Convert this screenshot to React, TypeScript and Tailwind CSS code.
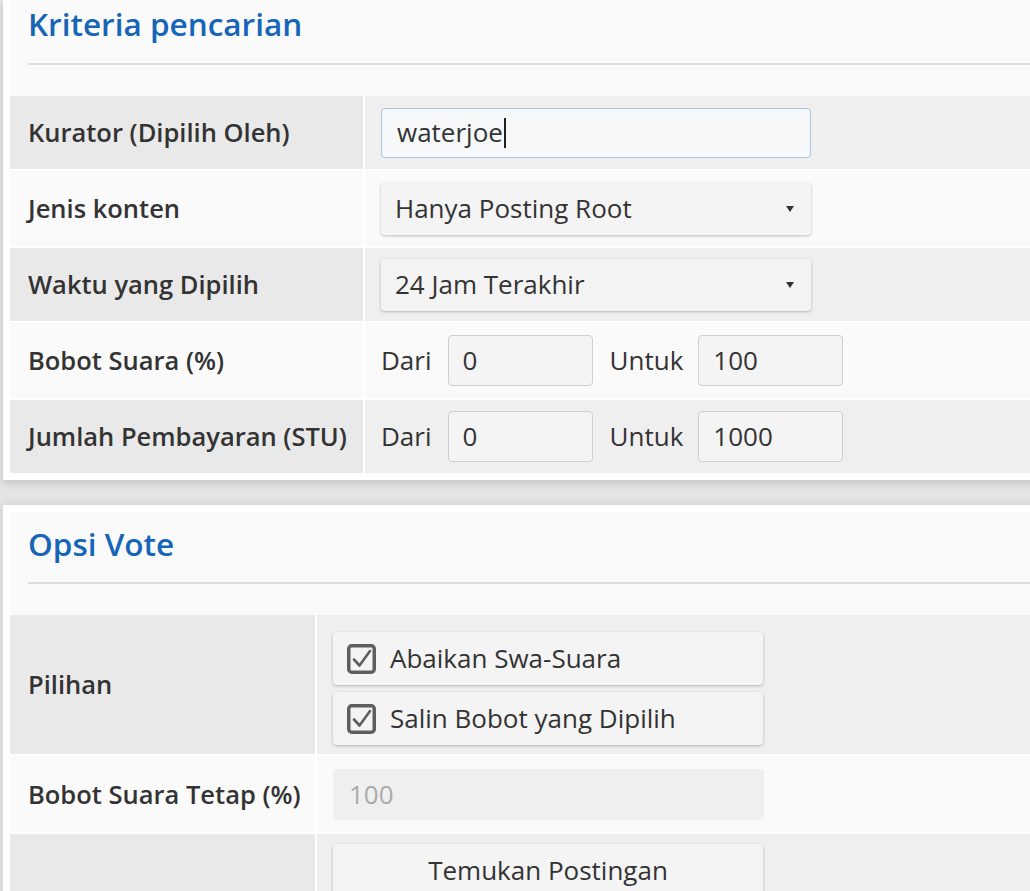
import React from 'react'

const font = { fontFamily: '"Open Sans", "Liberation Sans", sans-serif' }

function CheckIcon() {
  return (
    <svg width="29" height="30" viewBox="0 0 29 30" className="shrink-0">
      <rect x="1.75" y="1.75" width="25.5" height="26.5" rx="3" fill="none" stroke="#5e5e5e" strokeWidth="3.5" />
      <path d="M7 15.5 L12.5 21.5 L23 7" fill="none" stroke="#5e5e5e" strokeWidth="2.6" strokeLinecap="round" strokeLinejoin="round" />
    </svg>
  )
}

function Arrow() {
  return (
    <svg width="8" height="6" viewBox="0 0 8 6">
      <path d="M0 0 L8 0 L4 6 Z" fill="#333" />
    </svg>
  )
}

function Label({ children, dark }: { children: React.ReactNode; dark: boolean }) {
  return (
    <div className={`flex items-center pl-[18px] text-[25.5px] font-semibold text-[#333] ${dark ? 'bg-[#e9e9e9]' : 'bg-[#fafafa]'}`}>
      {children}
    </div>
  )
}

function Value({ children, dark, className = '' }: { children: React.ReactNode; dark: boolean; className?: string }) {
  return (
    <div className={`flex items-center pl-[16px] ${dark ? 'bg-[#efefef]' : 'bg-[#fafafa]'} ${className}`}>
      {children}
    </div>
  )
}

function RangeInputs({ to }: { to: string }) {
  return (
    <div className="flex items-center text-[26px] text-[#333]">
      <span>Dari</span>
      <div className="ml-[16px] flex h-[51px] w-[145px] items-center rounded-[4px] border border-[#cfcfcf] bg-[#f4f4f4] pl-[14px]">0</div>
      <span className="ml-[17px]">Untuk</span>
      <div className="ml-[15px] flex h-[51px] w-[145px] items-center rounded-[4px] border border-[#cfcfcf] bg-[#f4f4f4] pl-[14px]">{to}</div>
    </div>
  )
}

function SelectBox({ text }: { text: string }) {
  return (
    <div className="flex h-[52px] w-[430px] items-center justify-between rounded-[4px] bg-[#f4f4f4] pl-[14px] pr-[17px] text-[26px] text-[#333] shadow-[0_1px_3px_rgba(0,0,0,0.25)]">
      <span>{text}</span>
      <Arrow />
    </div>
  )
}

function CheckButton({ text }: { text: string }) {
  return (
    <div className="flex h-[53px] w-[430px] items-center gap-[14px] rounded-[4px] bg-[#f4f4f4] pl-[14px] text-[26px] text-[#333] shadow-[0_1px_3px_rgba(0,0,0,0.25)]">
      <CheckIcon />
      <span>{text}</span>
    </div>
  )
}

export default function App() {
  return (
    <div className="h-[891px] w-[1030px] overflow-hidden bg-[#e4e4e4] pl-[3px]" style={font}>
      <div className="w-[1060px]">
        {/* Kriteria pencarian */}
        <div className="bg-white px-[7px] pb-[7px] shadow-[0_3px_8px_rgba(0,0,0,0.15)]">
          <div className="bg-[#fafafa]">
            <div className="px-[18px] pt-[5px]">
              <h2 className="h-[37px] text-[31.5px] font-semibold leading-[37px] text-[#1565b8]">Kriteria pencarian</h2>
              <div className="mt-[21px] h-[2px] bg-[#dedede]" />
            </div>
            <div className="mt-[31px] grid grid-cols-[353px_1fr] gap-[2px] bg-white">
              <Label dark>Kurator (Dipilih Oleh)</Label>
              <Value dark className="h-[73px]">
                <div className="flex h-[50px] w-[430px] items-center rounded-[4px] border border-[#a9c4e0] bg-[#f6f8fa] pl-[15px] text-[26px] text-[#333]">
                  <span>waterjoe</span>
                  <span className="ml-[1px] h-[30px] w-[2px] bg-[#222]" />
                </div>
              </Value>

              <Label dark={false}>Jenis konten</Label>
              <Value dark={false} className="h-[75px]">
                <SelectBox text="Hanya Posting Root" />
              </Value>

              <Label dark>Waktu yang Dipilih</Label>
              <Value dark className="h-[73px]">
                <SelectBox text="24 Jam Terakhir" />
              </Value>

              <Label dark={false}>Bobot Suara (%)</Label>
              <Value dark={false} className="h-[75px]">
                <RangeInputs to="100" />
              </Value>

              <Label dark>Jumlah Pembayaran (STU)</Label>
              <Value dark className="h-[73px]">
                <RangeInputs to="1000" />
              </Value>
            </div>
          </div>
        </div>

        {/* Opsi Vote */}
        <div className="mt-[25px] bg-white px-[7px] pt-[7px] shadow-[0_0_8px_rgba(0,0,0,0.12)]">
          <div className="bg-[#fafafa]">
            <div className="px-[18px] pt-[13px]">
              <h2 className="h-[37px] text-[31.5px] font-semibold leading-[37px] text-[#1565b8]">Opsi Vote</h2>
              <div className="mt-[20px] h-[2px] bg-[#dedede]" />
            </div>
            <div className="mt-[31px] grid grid-cols-[305px_1fr] gap-[2px] bg-white">
              <Label dark>Pilihan</Label>
              <Value dark className="flex-col items-start justify-start pb-[9px] pt-[17px]">
                <div className="flex flex-col gap-[7px]">
                  <CheckButton text="Abaikan Swa-Suara" />
                  <CheckButton text="Salin Bobot yang Dipilih" />
                </div>
              </Value>

              <Label dark={false}>Bobot Suara Tetap (%)</Label>
              <Value dark={false} className="h-[76px]">
                <div className="flex h-[51px] w-[431px] items-center rounded-[4px] bg-[#efefef] pl-[16px] text-[26px] text-[#aaa]">100</div>
              </Value>

              <Label dark>{''}</Label>
              <Value dark className="h-[80px] items-start pt-[10px]">
                <div className="flex h-[52px] w-[430px] items-center justify-center rounded-[4px] bg-[#f4f4f4] text-[26px] text-[#333] shadow-[0_1px_3px_rgba(0,0,0,0.25)]">
                  Temukan Postingan
                </div>
              </Value>
            </div>
          </div>
        </div>
      </div>
    </div>
  )
}
